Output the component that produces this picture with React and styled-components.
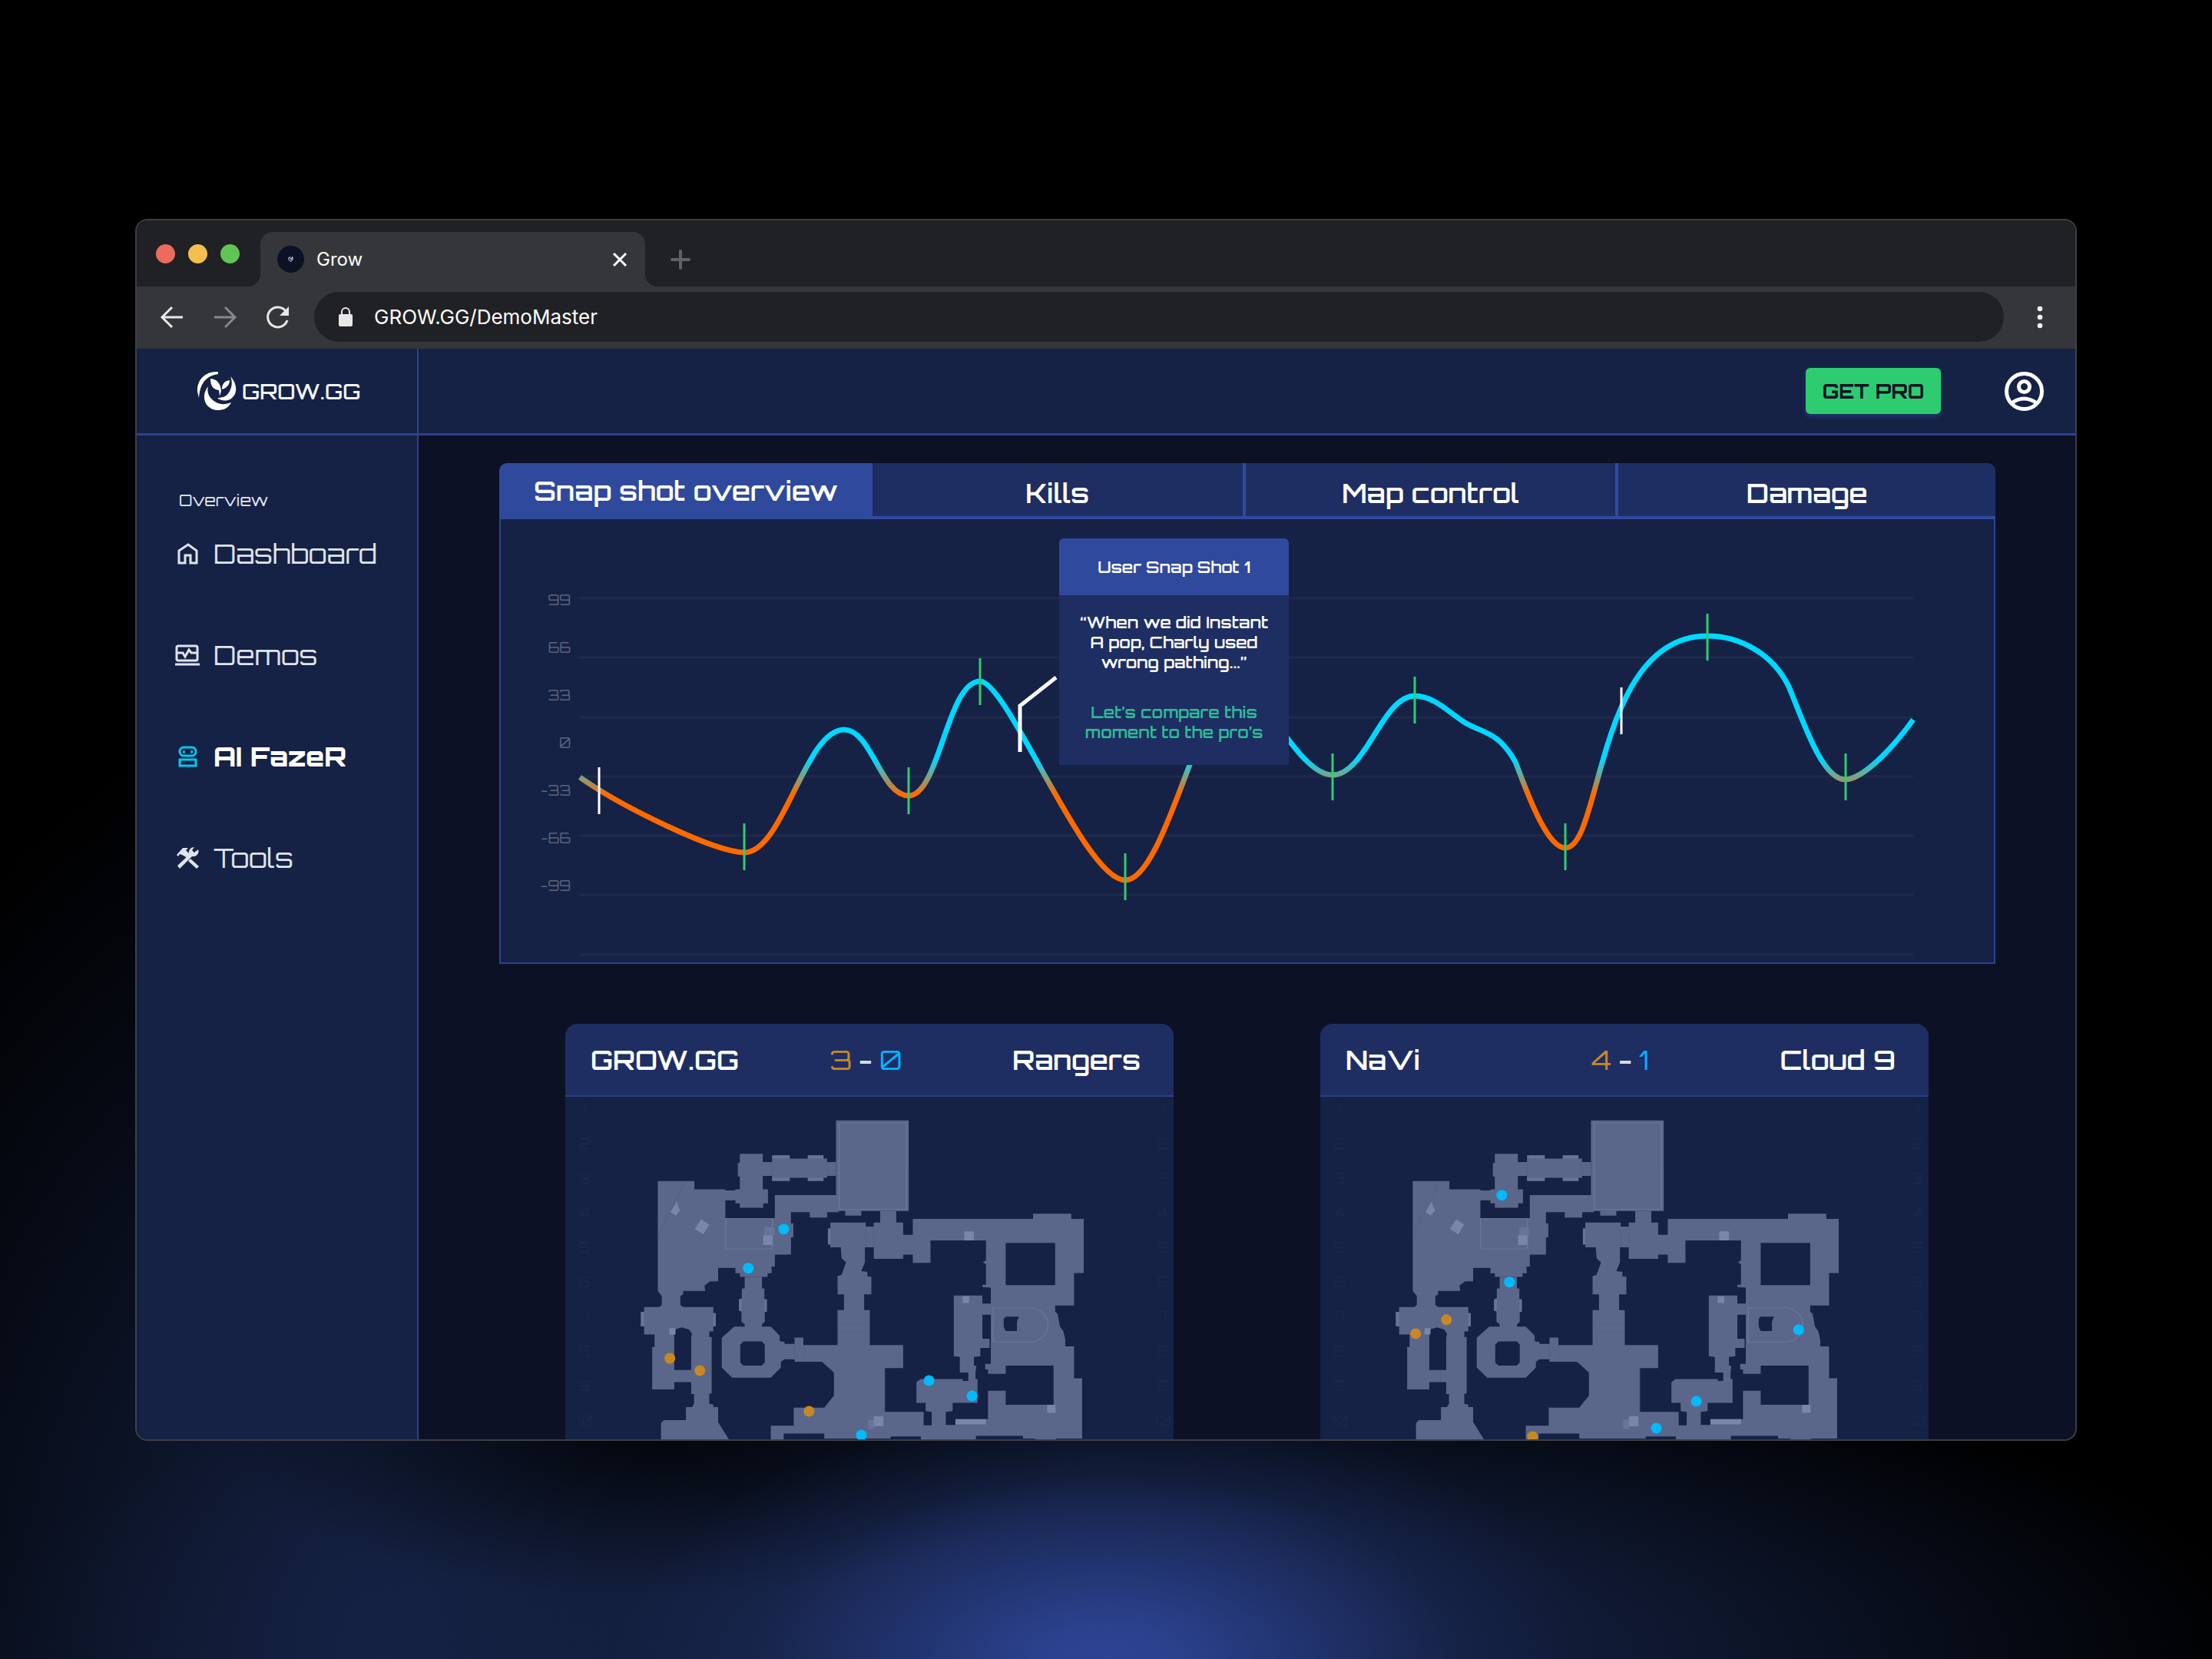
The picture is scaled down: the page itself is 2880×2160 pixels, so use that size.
import React from "react";
import styled, { createGlobalStyle } from "styled-components";

const brandFont = '"Orbitron", "DejaVu Sans", sans-serif';
const chromeFont = '"Inter", "Roboto", sans-serif';

const GlobalStyle = createGlobalStyle`
  * { box-sizing: border-box; }
  body { margin: 0; background: #000; }
  button, input { font: inherit; color: inherit; }
`;

const Page = styled.div`
  display: flex;
  height: 100vh;
  padding: 285px 176px 284px;
  overflow: hidden;
  background:
    radial-gradient(ellipse 640px 330px at 1440px 100%, #2c4493 0%, rgba(44, 68, 147, 0.94) 12%, rgba(42, 64, 140, 0.62) 40%, rgba(38, 58, 126, 0.2) 72%, rgba(34, 52, 110, 0) 100%),
    radial-gradient(ellipse 560px 220px at 850px calc(100% - 300px), rgba(0, 0, 0, 0.75) 0%, rgba(0, 0, 0, 0) 100%),
    radial-gradient(ellipse 1500px 440px at 1440px 100%, #152244 0%, rgba(21, 34, 68, 0.75) 45%, rgba(21, 34, 68, 0) 100%),
    radial-gradient(ellipse 850px 1250px at 500px 100%, #152244 0%, rgba(21, 34, 68, 0) 100%),
    #000;
`;

const Window = styled.div`
  flex: 1;
  display: flex;
  flex-direction: column;
  min-width: 0;
  border: 2px solid #3d3f44;
  border-radius: 16px;
  overflow: hidden;
  background: #0c1126;
`;

const TabStrip = styled.div`
  display: flex;
  align-items: flex-end;
  flex: none;
  height: 86px;
  padding-left: 25px;
  background: #202124;
`;

const Lights = styled.div`
  display: flex;
  gap: 17px;
  align-self: center;
  margin-right: 27px;
`;

const Light = styled.button`
  width: 25px;
  height: 25px;
  padding: 0;
  border: 0;
  border-radius: 50%;
  background: ${(p) => p.$color};
`;

const BrowserTab = styled.div`
  position: relative;
  display: flex;
  align-items: center;
  width: 501px;
  height: 71px;
  padding: 0 20px 0 22px;
  border-radius: 16px 16px 0 0;
  background: #35363a;
  color: #fff;
  font: 400 24px ${chromeFont};
  &::before, &::after {
    content: "";
    position: absolute;
    bottom: 0;
    width: 16px;
    height: 16px;
  }
  &::before { left: -16px; background: radial-gradient(circle at 0 0, transparent 16px, #35363a 16px); }
  &::after { right: -16px; background: radial-gradient(circle at 100% 0, transparent 16px, #35363a 16px); }
`;

const TabTitle = styled.span`
  flex: 1;
  margin-left: 16px;
`;

const IconButton = styled.button`
  display: flex;
  align-items: center;
  justify-content: center;
  width: ${(p) => p.$size || 32}px;
  height: ${(p) => p.$size || 32}px;
  padding: 0;
  border: 0;
  background: none;
`;

const NewTab = styled(IconButton)`
  height: 71px;
  margin-left: 30px;
`;

const Toolbar = styled.div`
  display: flex;
  align-items: center;
  flex: none;
  height: 81px;
  padding: 0 30px 2px;
  gap: 37px;
  background: #35363a;
`;

const AddressBar = styled.label`
  display: flex;
  align-items: center;
  flex: 1;
  height: 65px;
  gap: 27px;
  padding: 0 31px;
  margin: 0 -6px;
  border-radius: 33px;
  background: #202124;
`;

const AddressInput = styled.input`
  flex: 1;
  padding: 0;
  border: 0;
  outline: 0;
  background: none;
  color: #fff;
  font: 400 26px ${chromeFont};
`;

const Site = styled.div`
  flex: 1;
  min-height: 0;
  display: grid;
  grid-template: 113px minmax(0, 1fr) / 367px minmax(0, 1fr);
  font-family: ${brandFont};
  color: #fff;
`;

const LogoCell = styled.a`
  display: flex;
  align-items: center;
  gap: 6px;
  padding-left: 77px;
  border-right: 2px solid #2b4290;
  border-bottom: 3px solid #2b4290;
  background: #152245;
  color: #f4f6fb;
  font-size: 28px;
  font-weight: 500;
  text-decoration: none;
`;

const Header = styled.header`
  display: flex;
  align-items: center;
  justify-content: flex-end;
  gap: 83px;
  padding-right: 41px;
  border-bottom: 3px solid #2b4290;
  background: #152245;
`;

const ProButton = styled.button`
  width: 176px;
  height: 60px;
  padding: 0;
  border: 0;
  border-radius: 6px;
  background: #2ecc71;
  box-shadow: 0 3px 6px rgba(50, 70, 140, 0.6);
  color: #0c1126;
  font-size: 26px;
  font-weight: 700;
`;

const Sidebar = styled.nav`
  padding: 69px 20px 0 50px;
  border-right: 2px solid #2b4290;
  background: #152245;
`;

const NavHeading = styled.h2`
  margin: 0 0 23px 5px;
  color: #e6e9f2;
  font-size: 21px;
  font-weight: 400;
  line-height: 30px;
`;

const NavList = styled.ul`
  margin: 0;
  padding: 0;
  list-style: none;
`;

const NavLink = styled.a`
  display: flex;
  align-items: center;
  gap: 18px;
  height: 64px;
  margin-bottom: 68px;
  color: ${(p) => (p.$active ? "#fff" : "#dfe3ee")};
  font-size: 35px;
  font-weight: ${(p) => (p.$active ? 800 : 400)};
  text-decoration: none;
  white-space: nowrap;
`;

const Main = styled.main`
  min-width: 0;
  padding: 36px 104px 0 105px;
  overflow: hidden;
`;

const Tabs = styled.div`
  display: grid;
  grid-template-columns: 1fr 1fr 1fr 1.01fr;
  height: 73px;
  border-radius: 10px 10px 0 0;
  overflow: hidden;
`;

const Tab = styled.button`
  padding: ${(p) => (p.$active ? "6px 0 2px" : "12px 0 2px")};
  border: 0 solid #2f4a9d;
  border-width: 0 ${(p) => (p.$divided ? 4 : 0)}px 4px 0;
  background: ${(p) => (p.$active ? "#2f4a9d" : "#1e2e62")};
  color: #fff;
  font-size: 35px;
  font-weight: 600;
  line-height: 1;
  white-space: nowrap;
`;

const ChartPanel = styled.section`
  position: relative;
  display: flex;
  padding: 103px 105px 8px 40px;
  border: 2px solid #2b4290;
  border-top: 0;
  background: #152245;
`;

const Axis = styled.ol`
  width: 51px;
  margin: -12px 11px 0 0;
  padding: 0;
  list-style: none;
  color: #5d6379;
  font-size: 18px;
  line-height: 28px;
  text-align: right;
`;

const AxisLabel = styled.li`
  margin-bottom: 34px;
`;

const Plot = styled.svg`
  display: block;
  flex: 1;
  min-width: 0;
  overflow: visible;
`;

const Popover = styled.aside`
  position: absolute;
  top: 25px;
  left: 37.4%;
  width: 299px;
  border-radius: 6px 6px 0 0;
  background: #1e2e62;
  font-size: 21px;
  font-weight: 600;
  line-height: 26px;
  text-align: center;
  white-space: nowrap;
`;

const PopoverTitle = styled.h3`
  margin: 0;
  padding: 24px 0;
  border-radius: 6px 6px 0 0;
  background: #2f4a9d;
  font-size: 21px;
  font-weight: 600;
`;

const Quote = styled.p`
  margin: 0;
  padding: 22px 0 39px;
`;

const CompareLink = styled.a`
  display: block;
  padding-bottom: 30px;
  color: #2bbd96;
  text-decoration: none;
`;

const Cards = styled.div`
  display: grid;
  grid-template-columns: 1fr 1fr;
  gap: 191px;
  padding: 78px 87px 0 86px;
`;

const Card = styled.article`
  border-radius: 16px;
  overflow: hidden;
  background: #152245;
`;

const CardHeader = styled.header`
  display: grid;
  grid-template-columns: 1fr auto 1fr;
  align-items: center;
  height: 95px;
  padding: 0 43px 0 33px;
  border-bottom: 2px solid #2a4087;
  background: #1e2e62;
  font-size: 35px;
  font-weight: 600;
`;

const Team = styled.span`
  text-align: ${(p) => p.$align};
`;

const Score = styled.span`
  display: flex;
  gap: 9px;
  color: #d8dcea;
`;

const Points = styled.span`
  color: ${(p) => p.$color};
  font-weight: 400;
`;

const MapDrawing = styled.svg`
  display: block;
  width: 100%;
`;

/* Chart data, in plot units */
const curve =
  "M755,1011C810,1050 930,1108 969,1109C1020,1109 1048,949 1099,949" +
  "C1135,949 1147,1035 1183,1035C1223,1035 1233,886 1276,886" +
  "C1312,886 1412,1145 1465,1145C1518,1145 1565,888 1612,888" +
  "C1640,888 1690,1008 1735,1008C1778,1008 1800,905 1842,905" +
  "C1866,905 1885,925 1906,939C1930,954 1950,950 1973,991" +
  "C1984,1018 2012,1103 2038,1103C2086,1103 2078,827 2223,827" +
  "C2265,827 2308,850 2329,893C2348,938 2372,1014 2403,1014" +
  "C2430,1012 2470,965 2491,936";
const gridLines = [778, 855, 933, 1010, 1087, 1164, 1242];
const markers = [
  [969, 1071], [1183, 998], [1276, 856], [1465, 1110], [1735, 980], [1842, 880], [2038, 1071], [2223, 798], [2403, 980],
];
const userMarkers = [[780, 998], [2111, 894]];

function SnapshotChart() {
  return (
    <Plot viewBox="754 778 1737 466" role="img" aria-label="Snap shot overview">
      <defs>
        <linearGradient id="level" gradientUnits="userSpaceOnUse" x1="0" y1="988" x2="0" y2="1034">
          <stop offset="0" stopColor="#00d8ff" />
          <stop offset="1" stopColor="#ff6a00" />
        </linearGradient>
      </defs>
      {gridLines.map((y) => (
        <path key={y} d={`M754,${y}H2491`} stroke="#1f2a4d" strokeWidth="3" />
      ))}
      <path d={curve} fill="none" stroke="url(#level)" strokeWidth="7" />
      {markers.map(([x, y]) => (
        <path key={x} d={`M${x},${y}v61`} stroke="#2ecc71" strokeWidth="3" />
      ))}
      {userMarkers.map(([x, y]) => (
        <path key={x} d={`M${x},${y}v61`} stroke="#fff" strokeWidth="3" />
      ))}
      <path d="M1328,978V918L1375,881" fill="none" stroke="#fff" strokeWidth="5" />
    </Plot>
  );
}

const westWing =
  "M262,609H353V639H430V643H455V639H466V592H461V543H466V510H523V540H546V527H551V515H590V527H635V515H674V527H683V540H705V590H683V597H674V608H635V597H590V608H546V590H523V639H536V690H524V706H466V690H455V679H430V744H553V660H712V722H683V742H640V722H593V763H599V814H593V877H553V920H545V945H535V958H466V945H455V925H412V974H392L378,990L380,1009H325V1022L318,1028V1060L325,1068H400V1090H406V1138H400V1157H390V1177H396V1383H390V1420L400,1423V1432H412V1487L443,1560H270V1490L277,1480H332V1432H347L352,1420V1385H345V1341H303V1368H248V1213H254V1168H228V1138H220V1085H228V1068H266L272,1060V1028L262,1009ZM303,1150V1297H345V1180L347,1165L340,1150L322,1142Z";
const eastWing =
  "M478,958H521V1000H527V1040H533V1085H528V1122L521,1130V1139H543L565,1172V1192L577,1195V1202H602V1179H624V1206H709V1079H725V1022H709V955L719,950L730,905L719,890L717,850H691V840H685V782H691V760H779V775H799V760H815V718H855V760H872V805H896V747H1195V728H1290V747H1321V944H1297V1062H1250V1085L1256,1092L1262,1140L1270,1155L1275,1185V1211H1297V1327H1317V1547H1252V1560H1200V1547H1170V1537H1053V1560H916V1539H841V1547H676V1529H575V1560H543V1500H600V1434H676L700,1390V1306L670,1267H602V1258H577L568,1267V1288L543,1325H447L421,1288V1180L452,1139H478V1130L470,1122V1085L464,1080V1040L471,1035V1000H478Z" +
  "M475,1193L467,1205V1270L475,1281H520L528,1270V1205L521,1193Z" +
  "M872,877H896V907H940V825H1078V898L1070,905L1078,912V987H1069V995L1090,997V1055H1069V1026H998V1247L1013,1250V1306H1034V1337H1020V1330H915L905,1341V1417H928V1447L943,1450V1499H923V1450H826V1290H872V1206H789V1079H775V1022H793V958L783,955V940L768,937L777,905V850H799V892H872Z" +
  "M1069,1096H1090V1275H1076V1295H1083V1311H1127V1281H1246V1424H1127V1373H1083V1476H1002V1497H978V1450L995,1447V1417H1057V1330H1052V1306L1054,1283L1048,1280V1250L1064,1247V1217H1087V1183H1069Z" +
  "M1127,834H1250V988H1127Z" +
  "M1127,1103H1160L1155,1120V1155H1127L1122,1140V1112Z";

function MatchMap({ attackers, defenders }) {
  const rows = [1, 2, 3, 4, 5, 6, 7, 8, 9, 10];
  return (
    <MapDrawing viewBox="0 0 791 520" role="img" aria-label="Player positions">
      <g fill="#1b274d" fontSize="18" fontFamily={brandFont} textAnchor="middle">
        {rows.map((n) => (
          <React.Fragment key={n}>
            <text x="25" y={n * 45 - 22}>{n}</text>
            <text x="777" y={n * 45 - 22}>{n}</text>
          </React.Fragment>
        ))}
      </g>
      <g transform="scale(0.523 0.357) translate(-32 -302)">
        <g fill="#5b678a" fillRule="evenodd">
          <path d={westWing} />
          <path d={eastWing} />
          <path d="M705,388H886V718H768V735H728V718H705Z" />
        </g>
        <g fill="none" stroke="#6a7599" strokeWidth="3">
          <path d="M713,397H880V712H713Z" />
          <path d="M431,746H547V856H431Z" />
          <path d="M1096,1071H1197Q1232,1090 1232,1133T1197,1195H1096Z" />
        </g>
        <path d="M330,612L262,810M709,1100H789M709,1130H789M709,1160H789M826,1290V1450M799,775V850M779,775V850M683,540V590M546,540V590M624,1206V1267M602,1206V1258" fill="none" stroke="#556085" strokeWidth="2" />
        <g fill="#68739a">
          <path d="M527,777H552V806H527ZM785,1478H800V1512H785Z" />
          <path d="M546,515H590V527H546ZM635,515H674V527H635ZM546,597H590V608H546ZM635,597H674V608H635ZM220,1085H228V1138H220ZM400,1090H406V1138H400ZM464,1040H471V1082H464ZM527,1040H533V1085H527ZM685,782H691V840H685Z" />
        </g>
        <g fill="#7a85a9">
          <path d="M1024,792H1048V825H1024ZM1020,1029H1036V1053H1020ZM524,806H547V842H524ZM1230,1424H1251V1453H1230ZM799,1466H823V1502H799ZM1002,1476H1078V1495H1002ZM291,1145H306V1168H291Z" />
          <path d="M370,748L390,768L375,803L354,783Z" />
          <path d="M293,722L309,683L312,700L318,715L307,735Z" />
        </g>
      </g>
      {attackers.map(([x, y]) => (
        <circle key={`${x}-${y}`} cx={x} cy={y} r="7" fill="#c98724" />
      ))}
      {defenders.map(([x, y]) => (
        <circle key={`${x}-${y}`} cx={x} cy={y} r="7" fill="#00baff" />
      ))}
    </MapDrawing>
  );
}

const matches = [
  {
    home: "GROW.GG", away: "Rangers", score: [3, 0],
    attackers: [[136, 340], [175, 356], [317, 409]],
    defenders: [[284, 172], [238, 223], [473, 369], [529, 389], [385, 440]],
  },
  {
    home: "NaVi", away: "Cloud 9", score: [4, 1],
    attackers: [[164, 290], [124, 308], [276, 442]],
    defenders: [[236, 128], [246, 241], [622, 303], [489, 396], [437, 431]],
  },
];

const navItems = [
  {
    label: "Dashboard",
    icon: <path d="M5,12L17,4L28,12V28H20V18H13V28H5Z" />,
  },
  {
    label: "Demos",
    icon: <><rect x="2" y="4" width="27" height="19" rx="2" /><path d="M0,28H32M2,13H10L13,18L18,9L21,13H29" /></>,
  },
  {
    label: "AI FazeR",
    active: true,
    icon: <><rect x="6" y="4" width="21" height="11" rx="5" /><rect x="6" y="20" width="21" height="8" /><path d="M10,10H13M20,10H23" /></>,
  },
  {
    label: "Tools",
    icon: (
      <g fill="currentColor" stroke="none">
        <path d="M2,12L10,3H17L14,6L17,9L20,12L16,16L9,12L6,11L4,14Z" />
        <path d="M3,26L18,12C17,6 20,2 25,2L22,6L25,9L30,5C32,10 28,15 22,14L6,30Z" />
        <path d="M17,20L20,17L31,27L28,30Z" />
      </g>
    ),
  },
];

export default function App() {
  return (
    <Page>
      <GlobalStyle />
      <Window>
        <TabStrip>
          <Lights>
            <Light $color="#ed6a5e" aria-label="Close window" />
            <Light $color="#f5bf4f" aria-label="Minimize window" />
            <Light $color="#61c554" aria-label="Zoom window" />
          </Lights>
          <BrowserTab>
            <svg width="35" height="35" viewBox="0 0 35 35">
              <circle cx="17.500" cy="17.500" r="17.500" fill="#0c1126" />
              <path d="M15,15Q14,20 18,20Q21,19 20,15M16,14L18,18L20,14" fill="none" stroke="#e8ebf5" strokeWidth="1" />
            </svg>
            <TabTitle>Grow</TabTitle>
            <IconButton $size={26} aria-label="Close tab">
              <svg width="26" height="26" viewBox="0 0 26 26" fill="none" stroke="#fff" strokeWidth="3">
                <path d="M5,5L21,21M21,5L5,21" />
              </svg>
            </IconButton>
          </BrowserTab>
          <NewTab aria-label="New tab">
            <svg width="28" height="28" viewBox="0 0 28 28" fill="none" stroke="#5f6368" strokeWidth="4" strokeLinecap="round">
              <path d="M14,3V25M3,14H25" />
            </svg>
          </NewTab>
        </TabStrip>
        <Toolbar>
          <IconButton aria-label="Back">
            <svg width="32" height="32" viewBox="0 0 32 32" fill="none" stroke="#e8e8e8" strokeWidth="3">
              <path d="M30,16H4M16,3L3,16L16,29" />
            </svg>
          </IconButton>
          <IconButton aria-label="Forward">
            <svg width="32" height="32" viewBox="0 0 32 32" fill="none" stroke="#86878a" strokeWidth="3">
              <path d="M2,16H28M16,3L29,16L16,29" />
            </svg>
          </IconButton>
          <IconButton aria-label="Reload">
            <svg width="32" height="32" viewBox="0 0 32 32">
              <path d="M26,8A13,13 0 1 0 28,20" fill="none" stroke="#e8e8e8" strokeWidth="3" />
              <path d="M30,2V14H18Z" fill="#e8e8e8" />
            </svg>
          </IconButton>
          <AddressBar>
            <svg width="20" height="26" viewBox="0 0 20 26">
              <rect x="1" y="9" width="18" height="16" rx="2" fill="#e8e8e8" />
              <path d="M5,10V6A5,5 0 0 1 15,6V10" fill="none" stroke="#e8e8e8" strokeWidth="2" />
            </svg>
            <AddressInput aria-label="Address" defaultValue="GROW.GG/DemoMaster" />
          </AddressBar>
          <IconButton aria-label="Menu">
            <svg width="32" height="32" viewBox="0 0 32 32" fill="#f1f3f4">
              <circle cx="16" cy="5" r="3.300" />
              <circle cx="16" cy="16" r="3.300" />
              <circle cx="16" cy="27" r="3.300" />
            </svg>
          </IconButton>
        </Toolbar>
        <Site>
          <LogoCell href="#">
            <svg width="54" height="52" viewBox="0 0 54 52" fill="#fff">
              <path d="M29,1C12,0 1,12 2,27L4,35C5,17 13,6 29,4Z" />
              <path d="M16,20C5,34 13,51 29,51C38,51 43,47 46,41C38,44 31,44 25,40C17,35 14,28 16,20Z" />
              <path d="M45,7C55,18 54,30 46,36C40,40 32,39 28,35C35,35 40,33 43,28C47,22 48,14 45,7Z" />
              <path d="M19,10C19,19 22,24 30,25C30,26 31,30 31,33L33,26C32,16 28,11 19,10Z" />
              <path d="M44,12C37,13 34,17 34,24C40,22 44,18 44,12Z" />
            </svg>
            <span>GROW.GG</span>
          </LogoCell>
          <Header>
            <ProButton>GET PRO</ProButton>
            <IconButton $size={51} aria-label="Account">
              <svg width="51" height="51" viewBox="0 0 51 51" fill="none" stroke="#fff" strokeWidth="5">
                <circle cx="25.500" cy="25.500" r="23" />
                <circle cx="25.500" cy="19.500" r="7" />
                <path d="M9,41Q25,29 42,41" />
              </svg>
            </IconButton>
          </Header>
          <Sidebar>
            <NavHeading>Overview</NavHeading>
            <NavList>
              {navItems.map((item) => (
                <li key={item.label}>
                  <NavLink href="#" $active={item.active} aria-current={item.active ? "page" : undefined}>
                    <svg width="32" height="32" viewBox="0 0 32 32" fill="none" stroke={item.active ? "#00c8ee" : "currentColor"} strokeWidth="3">
                      {item.icon}
                    </svg>
                    {item.label}
                  </NavLink>
                </li>
              ))}
            </NavList>
          </Sidebar>
          <Main>
            <Tabs role="tablist">
              <Tab role="tab" aria-selected="true" $active>Snap shot overview</Tab>
              <Tab role="tab" aria-selected="false" $divided>Kills</Tab>
              <Tab role="tab" aria-selected="false" $divided>Map control</Tab>
              <Tab role="tab" aria-selected="false">Damage</Tab>
            </Tabs>
            <ChartPanel>
              <Axis>
                {["99", "66", "33", "0", "-33", "-66", "-99"].map((label) => (
                  <AxisLabel key={label}>{label}</AxisLabel>
                ))}
              </Axis>
              <SnapshotChart />
              <Popover>
                <PopoverTitle>User Snap Shot 1</PopoverTitle>
                <Quote>
                  “When we did Instant<br />A pop, Charly used<br />wrong pathing...”
                </Quote>
                <CompareLink href="#">
                  Let’s compare this<br />moment to the pro’s
                </CompareLink>
              </Popover>
            </ChartPanel>
            <Cards>
              {matches.map((m) => (
                <Card key={m.home}>
                  <CardHeader>
                    <Team $align="left">{m.home}</Team>
                    <Score>
                      <Points $color="#c98724">{m.score[0]}</Points>
                      <span>-</span>
                      <Points $color="#00b4ff">{m.score[1]}</Points>
                    </Score>
                    <Team $align="right">{m.away}</Team>
                  </CardHeader>
                  <MatchMap attackers={m.attackers} defenders={m.defenders} />
                </Card>
              ))}
            </Cards>
          </Main>
        </Site>
      </Window>
    </Page>
  );
}
